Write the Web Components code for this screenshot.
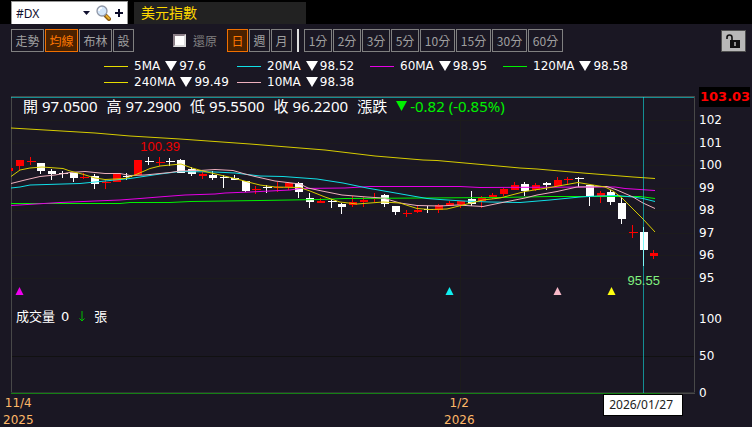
<!DOCTYPE html>
<html lang="zh-Hant">
<head>
<meta charset="utf-8">
<title>美元指數</title>
<style>
    body{
        margin: 0;
        background: #1a1723;
        font-family: "DejaVu Sans", "Noto Sans CJK TC", sans-serif;
        font-size: 12px;
        color: white;
    }
</style>
</head>
<body>
<chart-app></chart-app>
<script>
class QuoteHeader extends HTMLElement{
    constructor(){
        super();
        this.attachShadow({mode: "open"}).innerHTML = /*html*/`
            <style>
                :host{
                    display: flex;
                    gap: 6px;
                    height: 24px;
                    padding-left: 11px;
                    background: black;
                }
                .search{
                    display: flex;
                    align-items: center;
                    margin-top: 1px;
                    width: 117px;
                    box-sizing: border-box;
                    background: white;
                    border: 1px solid #999;
                    border-bottom: none;
                }
                .pick{
                    flex: 1;
                    display: grid;
                    align-items: center;
                }
                .pick > *{
                    grid-area: 1 / 1;
                }
                .pick svg{
                    justify-self: end;
                    pointer-events: none;
                }
                select{
                    appearance: none;
                    border: none;
                    background: none;
                    padding: 0 0 0 4px;
                    font: 12px "Noto Sans", sans-serif;
                    color: #111130;
                }
                button{
                    display: flex;
                    border: none;
                    background: none;
                    padding: 0;
                }
                .find{
                    margin: 0 4px 0 6px;
                }
                .plus{
                    margin-right: 4px;
                }
                h1{
                    margin: 2px 0 0;
                    padding-left: 7px;
                    width: 165px;
                    background: #222;
                    color: #ffd800;
                    font: 14px/20px "Noto Sans CJK TC", sans-serif;
                }
            </style>
            <div class="search">
                <label class="pick">
                    <select aria-label="商品代號"><option>#DX</option></select>
                    <svg width="7" height="4"><path d="M0 0H7L3.5 4Z" fill="#111130"/></svg>
                </label>
                <button class="find" aria-label="搜尋">
                    <svg width="15" height="16" viewBox="0 0 15 16">
                        <path d="M9.5 10.5L13 14" stroke="#8a5a14" stroke-width="4" stroke-linecap="round"/>
                        <path d="M10.5 11L13 13.5" stroke="#e8b02c" stroke-width="2" stroke-linecap="round"/>
                        <circle cx="6" cy="6" r="5" fill="#d3e6fa" stroke="#8f96a6" stroke-width="1.3"/>
                        <path d="M3 6Q3 3 6 3" stroke="white" stroke-width="1.5" fill="none"/>
                    </svg>
                </button>
                <button class="plus" aria-label="新增">
                    <svg width="8" height="8"><path d="M4 0V8M0 4H8" stroke="#0a0a28" stroke-width="2"/></svg>
                </button>
            </div>
            <h1><slot></slot></h1>
        `
    }
}
customElements.define("quote-header", QuoteHeader)

class ToolButton extends HTMLElement{
    constructor(){
        super();
        this.attachShadow({mode: "open"}).innerHTML = /*html*/`
            <style>
                :host{
                    display: block;
                }
                button{
                    display: block;
                    width: 21px;
                    height: 23px;
                    padding: 0;
                    background: none;
                    border: 1px solid #808080;
                    color: #a0a0a0;
                    font: 12px/20px "Noto Sans CJK TC", sans-serif;
                    white-space: nowrap;
                }
                :host([wide]) button{
                    width: 33px;
                }
                :host([minute]) button{
                    width: 28px;
                }
                :host([minute][wide]) button{
                    width: 35px;
                }
                :host([active]) button{
                    background: #4a2200;
                    border-color: #f07000;
                    color: #ff7800;
                }
            </style>
            <button><slot></slot></button>
        `
    }
}
customElements.define("tool-button", ToolButton)

class ChartToolbar extends HTMLElement{
    constructor(){
        super();
        this.attachShadow({mode: "open"}).innerHTML = /*html*/`
            <style>
                :host{
                    display: flex;
                    justify-content: space-between;
                    align-items: center;
                    height: 33px;
                    padding: 0 6px 0 11px;
                }
                .group{
                    display: flex;
                    align-items: center;
                    gap: 1px;
                }
                label{
                    display: flex;
                    align-items: center;
                    gap: 7px;
                    margin: 0 9px 0 38px;
                    color: #808080;
                    font: 12px/20px "Noto Sans CJK TC", sans-serif;
                }
                input{
                    appearance: none;
                    margin: 0;
                    width: 13px;
                    height: 13px;
                    background: white;
                    border: 2px solid;
                    border-color: #8c8088 #ddd #ddd #8c8088;
                }
                .line{
                    width: 2px;
                    height: 23px;
                    margin: 0 4px;
                    background: #e0e0e0;
                }
                .lock{
                    display: flex;
                    align-items: center;
                    justify-content: center;
                    width: 25px;
                    height: 22px;
                    padding: 0;
                    background: #b8b8b8;
                    border: 1px solid #505050;
                }
            </style>
            <div class="group">
                <tool-button wide>走勢</tool-button>
                <tool-button wide active>均線</tool-button>
                <tool-button wide>布林</tool-button>
                <tool-button>設</tool-button>
                <label><input type="checkbox">還原</label>
                <tool-button active>日</tool-button>
                <tool-button>週</tool-button>
                <tool-button>月</tool-button>
                <span class="line"></span>
                <tool-button minute>1分</tool-button>
                <tool-button minute>2分</tool-button>
                <tool-button minute>3分</tool-button>
                <tool-button minute>5分</tool-button>
                <tool-button minute wide>10分</tool-button>
                <tool-button minute wide>15分</tool-button>
                <tool-button minute wide>30分</tool-button>
                <tool-button minute wide>60分</tool-button>
            </div>
            <button class="lock" aria-label="解除鎖定">
                <svg width="15" height="14" viewBox="0 0 15 14">
                    <path d="M1 5V3.5Q1 1 3.5 1T6 3.5V6" fill="none" stroke="#111" stroke-width="1.6"/>
                    <rect x="4" y="6" width="10" height="8" fill="#111"/>
                    <path d="M9 8V12" stroke="#b8b8b8" stroke-width="1.5"/>
                </svg>
            </button>
        `
    }
}
customElements.define("chart-toolbar", ChartToolbar)

const averages = [
    {name: "5MA", value: "97.6", color: "#e6dc00"},
    {name: "20MA", value: "98.52", color: "#10dfe6"},
    {name: "60MA", value: "98.95", color: "#e600e6"},
    {name: "120MA", value: "98.58", color: "#00f000"},
    {name: "240MA", value: "99.49", color: "#e6dc00"},
    {name: "10MA", value: "98.38", color: "#eeb0bd"},
]

class MaLegend extends HTMLElement{
    constructor(){
        super();
        this.attachShadow({mode: "open"}).innerHTML = /*html*/`
            <style>
                :host{
                    display: grid;
                    grid-template-columns: repeat(4, 1fr);
                    grid-auto-rows: 16px;
                    padding: 1px 116px 0 104px;
                    height: 29px;
                }
                .item{
                    display: flex;
                    align-items: center;
                    line-height: 16px;
                }
                .item i{
                    width: 24px;
                    height: 1px;
                    margin-right: 6px;
                }
                svg{
                    margin: 0 2px 0 5px;
                }
            </style>
            ${averages.map(a => `
                <div class="item">
                    <i style="background:${a.color}"></i>
                    <span>${a.name}</span>
                    <svg width="12" height="10"><path d="M0 0H12L6 10Z" fill="white"/></svg>
                    <span>${a.value}</span>
                </div>
            `).join("")}
        `
    }
}
customElements.define("ma-legend", MaLegend)

// candle: direction, high, top of body, bottom of body, low
const candles = [
    ["u",160,160,166,170],["u",157,161,162,165],["d",163,163,171,174],["d",169,171,174,180],
    ["d",171,173,174,178],["d",173,173,178,182],["u",173,177,178,179],["d",174,176,184,189],
    ["u",180,182,183,189],["u",173,174,182,182],["d",173,176,177,180],["u",160,160,175,175],
    ["d",157,161,162,165],["u",157,162,163,166],["d",158,161,162,166],["d",159,160,173,173],
    ["d",167,169,174,176],["u",172,174,176,179],["d",171,175,178,180],["d",175,177,178,188],
    ["d",175,178,180,180],["d",181,181,191,192],["u",186,189,190,194],["d",185,187,188,193],
    ["u",182,187,188,192],["u",182,183,187,190],["d",182,183,192,198],["d",193,198,202,208],
    ["u",198,201,203,203],["d",199,201,202,208],["d",203,204,207,214],["u",196,202,205,207],
    ["u",197,200,202,207],["u",193,198,199,202],["d",194,195,204,207],["d",206,206,212,215],
    ["u",210,213,214,217],["u",205,210,212,213],["d",206,209,210,213],["u",204,205,210,213],
    ["u",201,203,206,206],["u",201,201,205,208],["d",191,199,204,206],["u",196,197,201,208],
    ["u",193,195,197,199],["u",188,189,194,196],["u",182,185,190,190],["d",182,184,191,196],
    ["u",183,185,190,191],["d",182,183,185,190],["u",177,180,186,186],["u",177,179,180,185],
    ["d",177,178,179,187],["d",185,185,196,206],["u",191,193,196,203],["d",190,192,202,205],
    ["d",198,203,219,224],["u",225,232,233,238],["d",227,232,250,266],["u",250,253,256,259],
]

const lines = [
    ["#d6cc00", "11,128 45,130 95,133 130,136 180,139 250,144 325,150 375,156 423,160 437,160.5 520,168 537,169 583,173 633,177 655,178.5"],
    ["#00f000", "11,203.5 120,203.5 130,202.5 170,202.5 190,201.5 225,201 260,200.5 320,199.5 345,198.5 500,197.5 550,196.5 640,196.5 655,198.5"],
    ["#e600e6", "11,205.5 60,202.5 95,201 120,200 140,198.5 165,196.5 185,195 215,194 225,193 250,192 270,191 290,190 300,188.5 345,188 370,186.5 460,186.5 480,187.5 600,187 615,187 625,188.5 655,190.5"],
    ["#10dfe6", "11,188 20,187 30,185 80,183.5 105,181 130,178.5 160,174 180,171.5 215,172 235,173 260,176 283,176.5 317,179 343,183 367,188 407,195 427,198.5 440,199.5 463,201 490,202 520,202.5 550,200 580,197 597,196 617,195.5 633,197 643,198.5 655,201.5"],
    ["#eeb0bd", "11,183.5 25,180 40,176.5 55,175 70,172.5 85,171.5 105,173.5 120,173.5 130,175.5 145,175 170,172.5 180,171 200,170.5 215,169.5 233,170.5 245,174 255,176.5 275,181 300,184 308,188 322,191 342,195 367,197 383,198 400,203 417,205.5 440,206 457,205 483,206.5 500,203 525,198 537,195 557,191.5 577,187 607,186.5 617,190 633,197 643,203 655,208.5"],
    ["#d6cc00", "11,176.5 20,170 30,168 42,167 63,168.5 70,171 82,174 95,178 105,179.5 125,178.5 135,175 150,168.5 160,166 181,164 192,168 205,171.5 220,175 235,178.5 250,182.5 260,185 275,187 300,187.5 310,191 325,197 340,202 357,204 383,202 400,203 417,208.5 430,209.5 447,209 463,205 483,200 500,198 525,191.5 550,187.5 578,182.5 605,187 613,191 622,198 643,219 655,232"],
]

const signals = [[19.5, "#f000f0"], [449.5, "#10eef0"], [557.5, "#f8b8c8"], [611.5, "#ffff10"]]

class PricePlot extends HTMLElement{
    constructor(){
        super();
        this.attachShadow({mode: "open"}).innerHTML = /*html*/`
            <style>
                :host{
                    display: block;
                    position: relative;
                }
                svg.plot{
                    position: absolute;
                    width: 100%;
                    height: 100%;
                }
                polyline, line{
                    fill: none;
                    vector-effect: non-scaling-stroke;
                }
                .crisp{
                    shape-rendering: crispEdges;
                }
                .quote, .volume{
                    position: relative;
                    display: flex;
                    align-items: center;
                    white-space: nowrap;
                }
                .quote{
                    gap: 9px;
                    padding: 0 0 0 12px;
                    height: 20px;
                    font: 15px/20px "Noto Sans", "Noto Sans CJK TC", sans-serif;
                }
                .quote span{
                    display: flex;
                    gap: 4px;
                }
                .quote i{
                    font-style: normal;
                }
                .quote .change{
                    align-items: center;
                    gap: 3px;
                    color: #00f000;
                }
                .mark{
                    position: absolute;
                    transform: translate(-50%, -50%);
                    font: 13px/14px "Liberation Sans", sans-serif;
                }
                .high{
                    left: 21.8%;
                    top: 17%;
                    color: #f00000;
                }
                .low{
                    left: 92.5%;
                    top: 62%;
                    color: #80f080;
                }
                .volume{
                    position: absolute;
                    left: 5px;
                    top: 71%;
                    gap: 6px;
                    font: 13px/18px "DejaVu Sans", "Noto Sans CJK TC", sans-serif;
                }
                .volume svg{
                    margin: 0 3px 0 4px;
                }
                .date{
                    position: absolute;
                    right: 12px;
                    top: 100%;
                    padding: 0 9px 0 5px;
                    background: white;
                    border: 1px solid black;
                    color: #222;
                    font: 12px/20px "Noto Sans", sans-serif;
                }
            </style>
            <svg class="plot" viewBox="11 96 684 298" preserveAspectRatio="none">
                ${this.frame()}
                ${this.candles()}
                ${lines.map(l => `<polyline points="${l[1]}" stroke="${l[0]}"/>`).join("")}
                ${signals.map(s => `<path d="M${s[0]} 287L${s[0] + 4} 295H${s[0] - 4}Z" fill="${s[1]}"/>`).join("")}
                <g class="crisp" stroke="#10f0f0" stroke-opacity="0.55">
                    <line x1="11" x2="694" y1="97.5" y2="97.5"/>
                    <line x1="643.5" x2="643.5" y1="97" y2="393"/>
                </g>
            </svg>
            <div class="quote">
                <span><i>開</i>97.0500</span>
                <span><i>高</i>97.2900</span>
                <span><i>低</i>95.5500</span>
                <span><i>收</i>96.2200</span>
                <span>漲跌</span>
                <span class="change">
                    <svg width="11" height="10"><path d="M0 0H11L5.5 10Z" fill="#00f000"/></svg>
                    -0.82 (-0.85%)
                </span>
            </div>
            <div class="mark high">100.39</div>
            <div class="mark low">95.55</div>
            <div class="volume">
                <span>成交量</span><span>0</span>
                <svg width="6" height="11"><path d="M3 0V10M0.5 7.5L3 10L5.5 7.5" fill="none" stroke="#00c000"/></svg>
                <span>張</span>
            </div>
            <div class="date">2026/01/27</div>
        `
    }
    frame(){
        let template = `<g class="crisp" stroke="#1c1b1c">`
        for(let i = 0; i < 8; i++){
            const y = 120.5 + Math.round(i * 22.5)
            template += `<line x1="12" x2="694" y1="${y}" y2="${y}"/>`
        }
        template += `
            <line x1="460.5" x2="460.5" y1="98" y2="393"/>
            <line x1="12" x2="694" y1="356.5" y2="356.5" stroke="#111"/>
            <line x1="11" x2="695" y1="96.5" y2="96.5" stroke="#484848"/>
            <line x1="11.5" x2="11.5" y1="96" y2="394" stroke="#484848"/>
            <line x1="694.5" x2="694.5" y1="96" y2="394" stroke="#484848"/>
            <line x1="11" x2="695" y1="392.5" y2="392.5" stroke="#303034"/>
            <line x1="11" x2="660" y1="393.5" y2="393.5" stroke="#148014"/>
            <line x1="660" x2="695" y1="393.5" y2="393.5" stroke="#484848"/>
        </g>`
        return template
    }
    candles(){
        let template = `<g class="crisp"><rect x="11" y="168" width="2" height="3" fill="red"/>`
        candles.forEach(([dir, high, top, bottom, low], i) => {
            const x = Math.floor(19.3 + i * 10.755)
            const color = dir == "u" ? "#ff0000" : "#ffffff"
            const width = bottom - top > 1 ? 8 : 9
            template += `<rect x="${x}" y="${high}" width="1" height="${low - high}" fill="${color}"/>`
            template += `<rect x="${x - 3}" y="${top}" width="${width}" height="${bottom - top}" fill="${color}"/>`
        })
        return template + `</g>`
    }
}
customElements.define("price-plot", PricePlot)

class ValueAxis extends HTMLElement{
    constructor(){
        super();
        this.attachShadow({mode: "open"}).innerHTML = /*html*/`
            <style>
                :host{
                    display: flex;
                    flex-direction: column;
                }
                .top{
                    height: 20px;
                    margin: 0 2px 2px 0;
                    padding-left: 1px;
                    box-sizing: border-box;
                    background: black;
                    color: red;
                    font-size: 13px;
                    font-weight: bold;
                    line-height: 20px;
                }
                ol{
                    display: flex;
                    flex-direction: column;
                    list-style: none;
                    margin: 0;
                    padding: 0;
                }
                li{
                    flex: 1;
                    display: flex;
                    align-items: center;
                }
                .prices{
                    flex: 180;
                }
                .volumes{
                    flex: 111;
                    margin: 11px 0 16px;
                }
            </style>
            <div class="top">103.03</div>
            <ol class="prices">
                ${[102, 101, 100, 99, 98, 97, 96, 95].map(v => `<li>${v}</li>`).join("")}
            </ol>
            <ol class="volumes">
                ${[100, 50, 0].map(v => `<li>${v}</li>`).join("")}
            </ol>
        `
    }
}
customElements.define("value-axis", ValueAxis)

class DateAxis extends HTMLElement{
    constructor(){
        super();
        this.attachShadow({mode: "open"}).innerHTML = /*html*/`
            <style>
                :host{
                    display: flex;
                    box-sizing: border-box;
                    height: 33px;
                    padding: 1px 0 0 3px;
                    color: #ffb868;
                    line-height: 17px;
                }
                .first{
                    flex: 441;
                }
                .second{
                    flex: 251;
                }
                time{
                    display: inline-block;
                    text-align: center;
                }
            </style>
            <div class="first"><time>11/4<br>2025</time></div>
            <div class="second"><time>1/2<br>2026</time></div>
        `
    }
}
customElements.define("date-axis", DateAxis)

class ChartApp extends HTMLElement{
    constructor(){
        super();
        this.attachShadow({mode: "open"}).innerHTML = /*html*/`
            <style>
                :host{
                    display: flex;
                    flex-direction: column;
                    height: 100vh;
                    overflow: hidden;
                }
                main{
                    flex: 1;
                    display: flex;
                    gap: 4px;
                }
                .left{
                    flex: 1;
                    display: flex;
                    flex-direction: column;
                }
                price-plot{
                    flex: 1;
                    margin: 9px 0 0 11px;
                    z-index: 1;
                }
                value-axis{
                    width: 53px;
                }
            </style>
            <quote-header>美元指數</quote-header>
            <chart-toolbar></chart-toolbar>
            <ma-legend></ma-legend>
            <main>
                <div class="left">
                    <price-plot></price-plot>
                    <date-axis></date-axis>
                </div>
                <value-axis></value-axis>
            </main>
        `
    }
}
customElements.define("chart-app", ChartApp)
</script>
</body>
</html>
